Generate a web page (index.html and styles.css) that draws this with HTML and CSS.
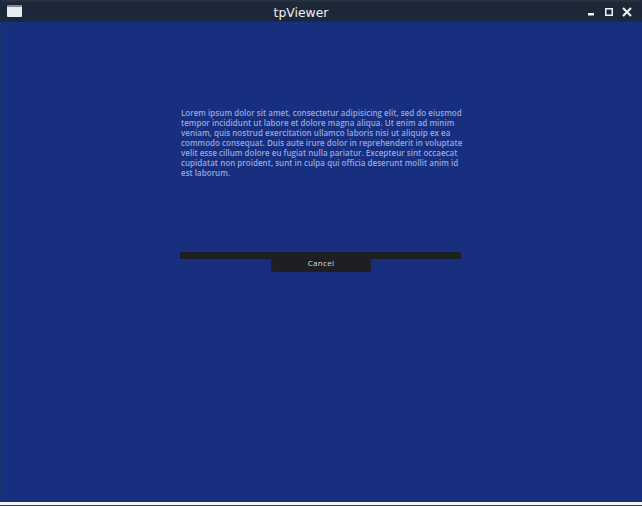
FILE: index.html
```html
<!DOCTYPE html>
<html lang="en">
<head>
<meta charset="utf-8">
<title>tpViewer</title>
<link rel="stylesheet" href="styles.css">
</head>
<body>
<div class="window">
  <header class="titlebar">
    <svg class="app-icon" width="15" height="12" viewBox="0 0 15 12"><rect x="0" y="0" width="15" height="12" rx="1" fill="#e8ebef"/><rect x="0" y="0" width="15" height="2" fill="#7d8797"/></svg>
    <span class="title">tpViewer</span>
    <div class="controls">
      <svg class="ctl-min" width="6" height="3" viewBox="0 0 6 3"><rect x="0" y="0" width="6" height="2.5" fill="#f2f4f6"/></svg>
      <svg class="ctl-max" width="8" height="8" viewBox="0 0 8 8"><rect x="0.75" y="0.75" width="6.5" height="6.5" fill="none" stroke="#f2f4f6" stroke-width="1.5"/></svg>
      <svg class="ctl-close" width="10" height="10" viewBox="0 0 10 10"><path d="M1 1L9 9M9 1L1 9" stroke="#f2f4f6" stroke-width="2"/></svg>
    </div>
  </header>
  <main class="content">
    <p class="message">Lorem ipsum dolor sit amet, consectetur adipisicing elit, sed do eiusmod<br>tempor incididunt ut labore et dolore magna aliqua. Ut enim ad minim<br>veniam, quis nostrud exercitation ullamco laboris nisi ut aliquip ex ea<br>commodo consequat. Duis aute irure dolor in reprehenderit in voluptate<br>velit esse cillum dolore eu fugiat nulla pariatur. Excepteur sint occaecat<br>cupidatat non proident, sunt in culpa qui officia deserunt mollit anim id<br>est laborum.</p>
    <div class="progress"></div>
    <button class="cancel"><span class="cancel-label">Cancel</span></button>
  </main>
  <div class="bottom-edge"></div>
</div>
</body>
</html>
```
FILE: styles.css
```css
* { box-sizing: border-box; }
html, body { margin: 0; height: 100%; background: #1b2a3f; }
.window { width: 642px; height: 506px; display: flex; flex-direction: column; overflow: hidden; }
.titlebar {
  height: 22px; flex: none; position: relative; display: flex; align-items: center;
  justify-content: center; padding: 0 40px 0 0;
  background: linear-gradient(#2b3542 0, #1c2737 3px, #1c2737 19px, #17294f 22px);
  border-radius: 3px 3px 0 0;
}
.app-icon { position: absolute; left: 7px; top: 5px; }
.title { font: 12.4px "DejaVu Sans", sans-serif; color: #eef1f4; padding-top: 2px; }
.controls { position: absolute; left: 588px; top: 7px; display: flex; align-items: flex-start; }
.controls svg { display: block; }
.ctl-min { margin: 6px 11px 0 0; }
.ctl-max { margin: 1px 9px 0 0; }
.content {
  flex: 1; display: flex; flex-direction: column; align-items: flex-start;
  background: #182f80; padding: 86px 0 0 180px;
  box-shadow: inset 2px 0 2px -1px #1a3a6a;
}
.message {
  margin: 0 0 0 1px; width: 285px; height: 144px;
  font: 600 8px/10px "Open Sans", sans-serif; letter-spacing: 0.02px;
  color: #93a8dc; white-space: nowrap;
}
.progress { width: 281px; height: 7px; background: #1d1f22; }
.cancel {
  display: flex; align-items: flex-start; justify-content: center;
  width: 100px; height: 13px; margin: 0 0 0 91px; padding: 0; border: 0;
  background: #1d1f22; border-radius: 0 0 2px 2px;
}
.cancel-label { color: #d9dbde; font: 8px/8px "Open Sans", sans-serif; letter-spacing: 0.3px; }
.bottom-edge { height: 4px; flex: none; background: linear-gradient(#f4f5f7 0, #f4f5f7 3px, #3c424a 3px); }
```
